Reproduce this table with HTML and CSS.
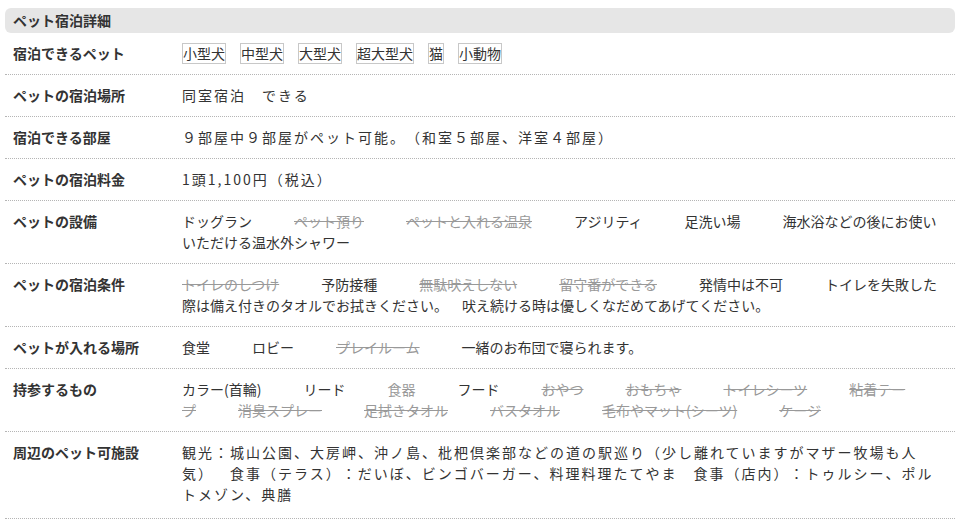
FILE: index.html
```html
<!DOCTYPE html>
<html lang="ja">
<head>
<meta charset="utf-8">
<title>ペット宿泊詳細</title>
<link rel="stylesheet" href="styles.css">
</head>
<body>
<section class="detail">
  <h2 class="detail-title">ペット宿泊詳細</h2>
  <div class="row">
    <div class="label">宿泊できるペット</div>
    <div class="value"><span class="tag">小型犬</span><span class="tag">中型犬</span><span class="tag">大型犬</span><span class="tag">超大型犬</span><span class="tag">猫</span><span class="tag">小動物</span></div>
  </div>
  <div class="row">
    <div class="label">ペットの宿泊場所</div>
    <div class="value spaced">同室宿泊　できる</div>
  </div>
  <div class="row">
    <div class="label">宿泊できる部屋</div>
    <div class="value spaced">９部屋中９部屋がペット可能。（和室５部屋、洋室４部屋）</div>
  </div>
  <div class="row">
    <div class="label">ペットの宿泊料金</div>
    <div class="value spaced">1頭1,100円（税込）</div>
  </div>
  <div class="row">
    <div class="label">ペットの設備</div>
    <div class="value"><span class="item">ドッグラン</span><span class="item off">ペット預り</span><span class="item off">ペットと入れる温泉</span><span class="item">アジリティ</span><span class="item">足洗い場</span><span class="item">海水浴などの後にお使いいただける温水外シャワー</span></div>
  </div>
  <div class="row">
    <div class="label">ペットの宿泊条件</div>
    <div class="value"><span class="item off">トイレのしつけ</span><span class="item">予防接種</span><span class="item off">無駄吠えしない</span><span class="item off">留守番ができる</span><span class="item">発情中は不可</span><span class="item">トイレを失敗した際は備え付きのタオルでお拭きください。　吠え続ける時は優しくなだめてあげてください。</span></div>
  </div>
  <div class="row">
    <div class="label">ペットが入れる場所</div>
    <div class="value"><span class="item">食堂</span><span class="item">ロビー</span><span class="item off">プレイルーム</span><span class="item">一緒のお布団で寝られます。</span></div>
  </div>
  <div class="row">
    <div class="label">持参するもの</div>
    <div class="value"><span class="item">カラー(首輪)</span><span class="item">リード</span><span class="item muted">食器</span><span class="item">フード</span><span class="item off">おやつ</span><span class="item off">おもちゃ</span><span class="item off">トイレシーツ</span><span class="item off">粘着テープ</span><span class="item off">消臭スプレー</span><span class="item off">足拭きタオル</span><span class="item off">バスタオル</span><span class="item off">毛布やマット(シーツ)</span><span class="item off">ケージ</span></div>
  </div>
  <div class="row">
    <div class="label">周辺のペット可施設</div>
    <div class="value spaced">観光：城山公園、大房岬、沖ノ島、枇杷倶楽部などの道の駅巡り（少し離れていますがマザー牧場も人気）　食事（テラス）：だいぼ、ビンゴバーガー、料理料理たてやま　食事（店内）：トゥルシー、ポルトメゾン、典膳</div>
  </div>
</section>
</body>
</html>
```
FILE: styles.css
```css
html, body {
  margin: 0;
  padding: 0;
  background: #fff;
}

body {
  font-family: "Noto Sans CJK JP", "Noto Sans", sans-serif;
  font-size: 14px;
  color: #333;
  text-spacing-trim: space-all;
}

.detail {
  width: 950px;
  margin: 8px 5px 0;
}

.detail-title {
  margin: 0;
  height: 25px;
  line-height: 25px;
  padding-left: 8px;
  background: #e6e6e6;
  border-radius: 6px;
  font-size: 14px;
  font-weight: bold;
  color: #333;
}

.row {
  display: grid;
  grid-template-columns: 177px 1fr;
  padding: 10px 0;
  border-bottom: 1px dotted #b5b5b5;
  line-height: 21px;
}

.row:last-child {
  padding-bottom: 13px;
}

.label {
  padding-left: 8px;
  font-weight: bold;
  color: #333;
}

.value {
  padding-right: 8px;
  color: #333;
}

.spaced {
  letter-spacing: 2px;
}

.tag {
  display: inline-block;
  border: 1px solid #c8c8c8;
  line-height: 19px;
  margin-right: 14px;
}

.item {
  margin-right: 3em;
}

.item:last-child {
  margin-right: 0;
}

.off {
  color: #999;
  text-decoration: line-through;
}

.muted {
  color: #999;
}
```
